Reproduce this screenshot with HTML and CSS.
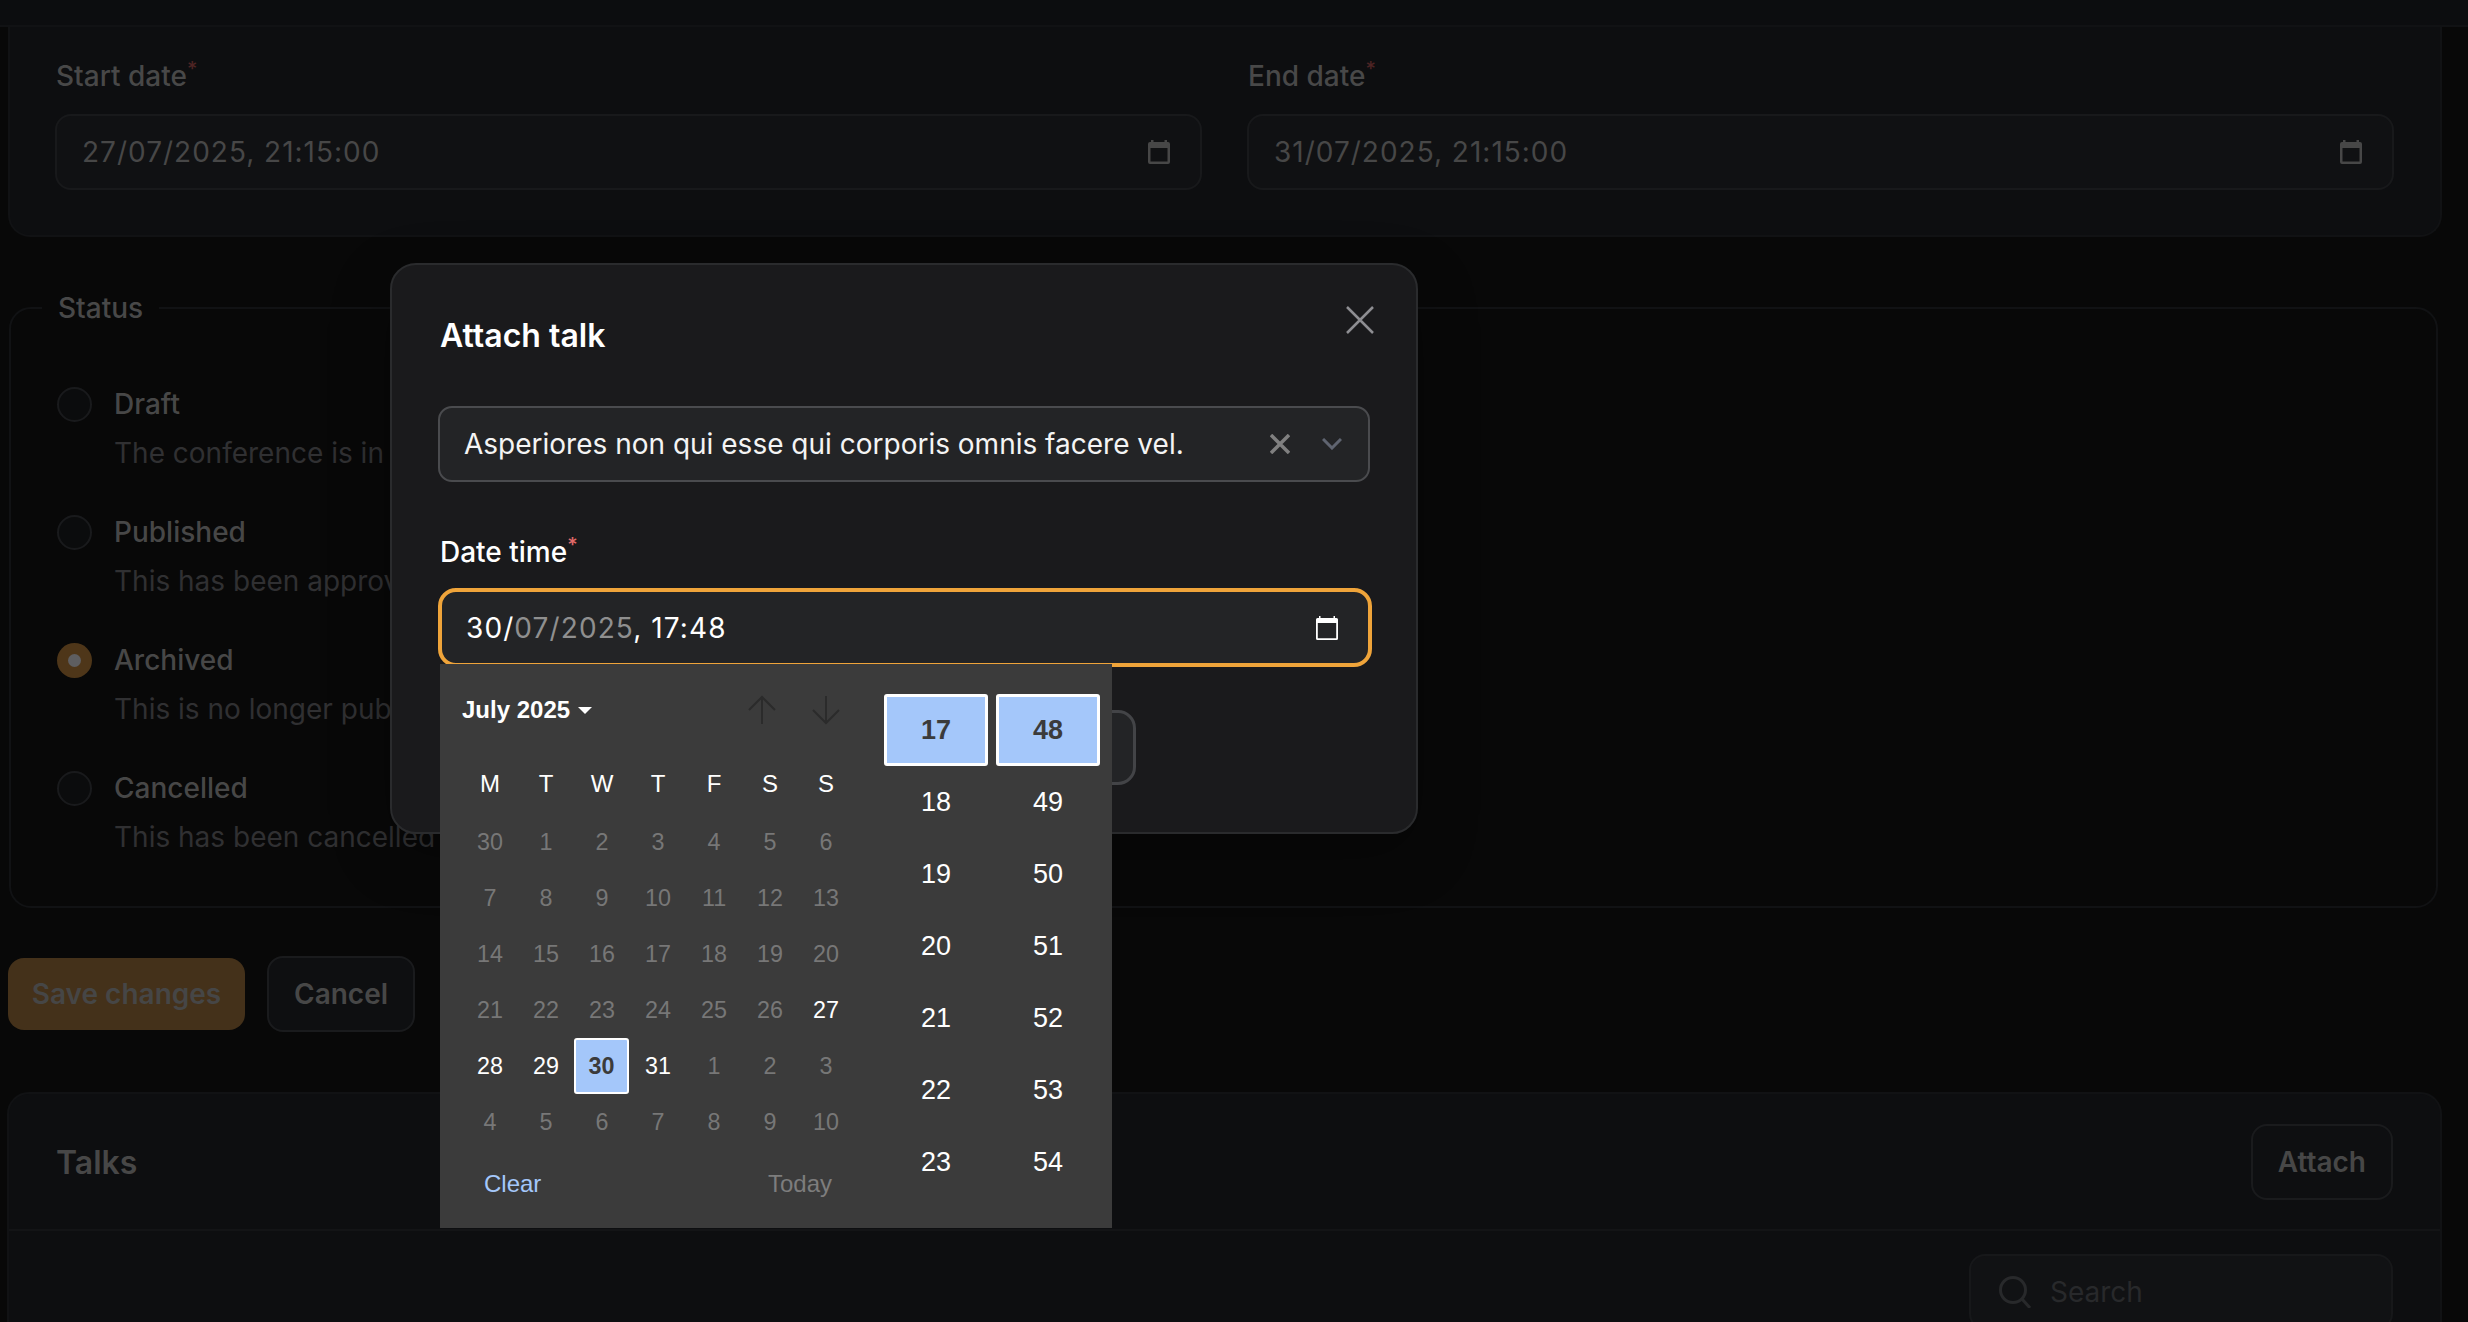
FILE: index.html
```html
<!DOCTYPE html>
<html lang="en">
<head>
<meta charset="utf-8">
<title>Attach talk</title>
<link rel="stylesheet" href="styles.css">
</head>
<body>
<div class="page">
  <div class="topbar"></div>
  <main class="content">
    <section class="card dates">
      <div class="field">
        <div class="dim-label">Start date<sup class="req-dim">*</sup></div>
        <div class="dim-input"><span>27/07/2025, 21:15:00</span>
          <svg class="cal" viewBox="0 0 22 24"><path fill-rule="evenodd" d="M3 0h2.500v2h11V0H19v2h1q2 0 2 2v18q0 2-2 2H2q-2 0-2-2V4q0-2 2-2h1zM2.500 8v13.500h17V8z"/></svg>
        </div>
      </div>
      <div class="field">
        <div class="dim-label">End date<sup class="req-dim">*</sup></div>
        <div class="dim-input"><span>31/07/2025, 21:15:00</span>
          <svg class="cal" viewBox="0 0 22 24"><path fill-rule="evenodd" d="M3 0h2.500v2h11V0H19v2h1q2 0 2 2v18q0 2-2 2H2q-2 0-2-2V4q0-2 2-2h1zM2.500 8v13.500h17V8z"/></svg>
        </div>
      </div>
    </section>

    <fieldset class="status">
      <legend>Status</legend>
      <div class="radio-row"><span class="radio"></span><div><div class="r-title">Draft</div><div class="r-desc">The conference is in draft</div></div></div>
      <div class="radio-row"><span class="radio"></span><div><div class="r-title">Published</div><div class="r-desc">This has been approved</div></div></div>
      <div class="radio-row"><span class="radio on"></span><div><div class="r-title">Archived</div><div class="r-desc">This is no longer public</div></div></div>
      <div class="radio-row"><span class="radio"></span><div><div class="r-title">Cancelled</div><div class="r-desc">This has been cancelled</div></div></div>
    </fieldset>

    <div class="actions">
      <div class="btn-save">Save changes</div>
      <div class="btn-ghost">Cancel</div>
    </div>

    <section class="card talks">
      <header class="talks-head">
        <h2>Talks</h2>
        <div class="btn-ghost">Attach</div>
      </header>
      <div class="talks-tools">
        <div class="search">
          <svg viewBox="0 0 32 32" class="search-ico"><circle cx="14" cy="14" r="12.500"/><path d="M23 23l8 9"/></svg>
          <span>Search</span>
        </div>
      </div>
    </section>
  </main>

  <div class="modal">
    <svg class="close" viewBox="0 0 30 30"><path d="M2 2l26 26M28 2L2 28"/></svg>
    <h1>Attach talk</h1>
    <div class="select">
      <span class="select-text">Asperiores non qui esse qui corporis omnis facere vel.</span>
      <svg class="sel-x" viewBox="0 0 20 20"><path d="M1 1l18 18M19 1L1 19"/></svg>
      <svg class="sel-c" viewBox="0 0 20 12"><path d="M1 1l9 9 9-9"/></svg>
    </div>
    <label class="m-label">Date time<sup class="req">*</sup></label>
    <div class="date-field">
      <span>30/<span class="seg">07/2025</span>, 17:48</span>
      <svg class="cal light" viewBox="0 0 22 24"><path fill-rule="evenodd" d="M3 0h1.500v2h13V0H19v2h1.500q1.500 0 1.500 1.500v19q0 1.500-1.500 1.500h-19Q0 24 0 22.500v-19Q0 2 1.500 2H3zM1.800 7v15.200h18.400V7z"/></svg>
      <div class="picker">
        <div class="cal-col">
          <div class="p-head">
            <span class="month">July 2025</span><span class="caret"></span>
            <span class="arrows">
              <svg viewBox="0 0 32 32"><path d="M16 30V3M3 16L16 3l13 13"/></svg>
              <svg viewBox="0 0 32 32"><path d="M16 2v27M3 16l13 13 13-13"/></svg>
            </span>
          </div>
          <div class="grid week"><span>M</span><span>T</span><span>W</span><span>T</span><span>F</span><span>S</span><span>S</span></div>
          <div class="grid days">
            <span>30</span><span>1</span><span>2</span><span>3</span><span>4</span><span>5</span><span>6</span>
            <span>7</span><span>8</span><span>9</span><span>10</span><span>11</span><span>12</span><span>13</span>
            <span>14</span><span>15</span><span>16</span><span>17</span><span>18</span><span>19</span><span>20</span>
            <span>21</span><span>22</span><span>23</span><span>24</span><span>25</span><span>26</span><span class="act">27</span>
            <span class="act">28</span><span class="act">29</span><span class="sel">30</span><span class="act">31</span><span>1</span><span>2</span><span>3</span>
            <span>4</span><span>5</span><span>6</span><span>7</span><span>8</span><span>9</span><span>10</span>
          </div>
          <div class="p-foot"><span class="clear">Clear</span><span class="today">Today</span></div>
        </div>
        <div class="time-col">
          <span class="cur">17</span><span>18</span><span>19</span><span>20</span><span>21</span><span>22</span><span>23</span>
        </div>
        <div class="time-col">
          <span class="cur">48</span><span>49</span><span>50</span><span>51</span><span>52</span><span>53</span><span>54</span>
        </div>
      </div>
    </div>
    <div class="m-actions">
      <div class="m-btn primary"></div>
      <div class="m-btn"></div>
    </div>
  </div>
</div>
</body>
</html>
```
FILE: styles.css
```css
* { box-sizing: border-box; }
html, body { margin: 0; height: 100%; }
body {
  background: #080808;
  font-family: Inter, "Liberation Sans", sans-serif;
  overflow: hidden;
}
.page { position: relative; width: 2468px; height: 1322px; overflow: hidden; }
.topbar { height: 27px; background: #0c0d0f; border-bottom: 2px solid #111214; }

.content { padding: 0 27px 0 8px; display: flex; flex-direction: column; }
.card {
  background: #0d0e10;
  border: 2px solid #111214;
  border-radius: 22px;
}
.dates {
  width: 2434px;
  border-top: 0;
  border-top-left-radius: 0;
  border-top-right-radius: 0;
  height: 210px;
  padding: 29px 45px 0;
  display: grid;
  grid-template-columns: 1147px 1147px;
  column-gap: 45px;
}
.dim-label {
  font-size: 28px; font-weight: 500; line-height: 40px; color: #484848;
  margin-bottom: 18px; padding-left: 1px;
}
.req-dim { color: #4e2424; font-size: 20px; line-height: 0; }
.dim-input {
  height: 76px;
  background: #101113;
  border: 2px solid #18191b;
  border-radius: 16px;
  display: flex; align-items: center; justify-content: space-between;
  padding: 0 30px 0 25px;
  font-size: 28px; color: #474747; letter-spacing: 1px;
}
.cal { width: 22px; height: 24px; fill: #474747; }
.cal.light { fill: #fff; }

.status {
  margin: 51px 0 0 1px;
  width: 2429px;
  padding: 52px 46px 44px;
  border: 2px solid #111214;
  border-radius: 22px;
  height: 620px;
  min-width: 0;
}
.status legend {
  margin-left: -15px;
  padding: 0 16px;
  height: 40px; line-height: 40px;
  font-size: 28px; font-weight: 500; color: #484848;
}
.radio-row { display: flex; height: 128px; }
.radio {
  width: 35px; height: 35px; border-radius: 50%;
  border: 2px solid #191a1c; background: #0b0c0d;
  margin-top: 7px; margin-right: 22px; flex: none;
}
.radio.on { border: 0; background: #4e3619; position: relative; }
.radio.on::after {
  content: ""; position: absolute; left: 11px; top: 11px; width: 13px; height: 13px;
  border-radius: 50%; background: #5e5e60;
}
.r-title { font-size: 28px; font-weight: 500; line-height: 49px; color: #474747; }
.r-desc { font-size: 28px; line-height: 49px; color: #303032; white-space: nowrap; }

.actions { display: flex; align-items: center; gap: 22px; margin-top: 47px; height: 78px; }
.btn-save {
  height: 72px; width: 237px; border-radius: 16px; background: #44311a; color: #464646;
  font-size: 28px; font-weight: 600; display: flex; align-items: center; justify-content: center;
}
.btn-ghost {
  height: 76px; padding: 0 25px; border-radius: 16px; background: #0e0f11; border: 2px solid #1a1b1d; color: #474747;
  font-size: 28px; font-weight: 600; display: flex; align-items: center; justify-content: center;
}
.talks { margin-top: 59px; width: 2435px; margin-left: -1px; height: 400px; }
.talks-head {
  height: 137px; padding: 1px 47px 0 47px; display: flex; align-items: center; justify-content: space-between;
  border-bottom: 2px solid #131416;
}
.talks-head h2 { margin: 0; font-size: 32px; font-weight: 600; color: #474747; }
.talks-tools { display: flex; justify-content: flex-end; padding: 23px 47px 0; }
.search {
  width: 424px; height: 76px; border: 2px solid #17181a; background: #111214; border-radius: 16px;
  display: flex; align-items: center; padding-left: 28px; gap: 19px;
  font-size: 28px; color: #28292b;
}
.search-ico { width: 32px; height: 32px; fill: none; stroke: #28292b; stroke-width: 3; }

.modal {
  position: absolute; left: 390px; top: 263px; width: 1028px; height: 571px;
  background: #1a1a1c; border: 2px solid #2a2b2d; border-radius: 26px;
  padding: 45px 46px 44px;
  box-shadow: 0 20px 60px rgba(0,0,0,.3);
}
.modal h1 { margin: 0 2px; font-size: 32px; font-weight: 600; color: #fff; line-height: 52px; }
.close { position: absolute; left: 953px; top: 40px; width: 30px; height: 30px; fill: none; stroke: #8e8e92; stroke-width: 2.500; }
.select {
  margin-top: 44px; height: 76px; width: 932px;
  background: #232426; border: 2px solid #4a4b4e; border-radius: 14px;
  display: flex; align-items: center; padding: 0 26px 0 24px;
  color: #f4f4f4; font-size: 28px;
}
.select-text { flex: 1; }
.sel-x { width: 20px; height: 20px; fill: none; stroke: #808080; stroke-width: 3.500; margin-right: 32px; }
.sel-c { width: 20px; height: 12px; fill: none; stroke: #5f6470; stroke-width: 3; }
.m-label {
  display: block; margin: 49px 2px 15px; line-height: 42px; height: 42px;
  font-size: 28px; font-weight: 500; color: #fff;
}
.req { color: #e26a6a; font-size: 20px; line-height: 0; }
.date-field {
  position: relative; width: 934px; height: 79px;
  background: #232426; border: 4px solid #efa43a; border-radius: 18px;
  display: flex; align-items: center; justify-content: space-between;
  padding: 0 30px 0 24px;
  color: #fff; font-size: 28px; letter-spacing: 1.100px;
}
.seg { color: #8f8f8f; }
.m-actions { display: flex; gap: 20px; margin-top: 43px; margin-left: 2px; }
.m-btn {
  height: 75px; width: 336px; border: 3px solid #434447; border-radius: 18px; background: #232426;
}
.m-btn.primary { width: 340px; background: #efa43a; border: 0; }

.picker {
  position: absolute; left: -2px; top: 72px; width: 672px; height: 564px;
  background: #3b3b3b;
  display: flex; padding: 30px 12px 0 22px;
  font-family: "Liberation Sans", Arial, sans-serif; letter-spacing: 0;
  color: #fff; cursor: default;
}
.cal-col { width: 392px; margin-top: -12px; }
.p-head { height: 56px; display: flex; align-items: center; }
.month { font-size: 24px; font-weight: 700; }
.caret {
  margin-left: 8px; margin-top: 1px;
  border-left: 7px solid transparent; border-right: 7px solid transparent; border-top: 7px solid #fff;
}
.arrows { margin-left: auto; display: flex; gap: 32px; margin-right: 12px; }
.arrows svg { width: 32px; height: 32px; fill: none; stroke: #2b2b2b; stroke-width: 2; }
.grid { display: grid; grid-template-columns: repeat(7, 56px); }
.grid span { display: flex; align-items: center; justify-content: center; }
.week { margin-top: 17px; height: 59px; font-size: 24px; padding-bottom: 2px; }
.days { grid-auto-rows: 56px; font-size: 23.330px; color: #777; }
.days .act { color: #fff; }
.days .sel { background: #a4c7fa; border: 2px solid #fff; border-radius: 3px; color: #3b3b3b; font-weight: 700; margin-right: 1px; }
.p-foot { margin-top: 8px; height: 52px; display: flex; justify-content: space-between; align-items: center; padding: 0 22px; font-size: 24px; }
.clear { color: #a4c7fa; }
.today { color: #7d7d7d; }
.time-col { width: 104px; display: flex; flex-direction: column; font-size: 27px; margin-left: 8px; }
.cal-col + .time-col { margin-left: 30px; }
.time-col span { height: 72px; flex: none; display: flex; align-items: center; justify-content: center; }
.time-col .cur { background: #a4c7fa; border: 3px solid #fff; border-radius: 3px; color: #3b3b3b; font-weight: 700; }
```
